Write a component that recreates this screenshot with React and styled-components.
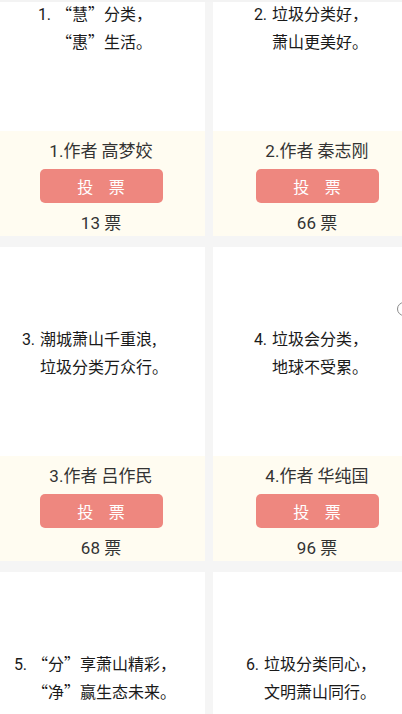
import React from "react";
import styled, { createGlobalStyle } from "styled-components";

const GlobalStyle = createGlobalStyle`
  html, body {
    margin: 0;
    padding: 0;
    background: #f5f5f5;
    overflow: hidden;
  }
  body {
    font-family: Roboto, "Noto Sans CJK SC", "Noto Sans", sans-serif;
    color: #222;
  }
`;

const Viewport = styled.div`
  width: 402px;
  height: 714px;
  overflow: hidden;
  position: relative;
`;

const TopEdge = styled.div`
  position: absolute;
  top: 0;
  left: 0;
  right: 0;
  height: 2px;
  background: #f3f3f3;
  z-index: 2;
`;

const Grid = styled.div`
  margin-top: -78px;
  margin-left: -3px;
  width: 424px;
  display: grid;
  grid-template-columns: 208px 208px;
  column-gap: 8px;
  row-gap: 11px;
`;

const Card = styled.div`
  display: flex;
  flex-direction: column;
  background: #fff;
  position: relative;
`;

const PoemArea = styled.div`
  height: 209px;
  display: flex;
  justify-content: center;
  align-items: center;
`;

const Poem = styled.div`
  display: flex;
  align-items: baseline;
  margin-right: 12px;
`;

const Num = styled.div`
  font-family: Roboto, sans-serif;
  font-size: 16px;
  line-height: 28px;
  color: #1a1a1a;
  padding-right: 5px;
  white-space: pre;
`;

const Lines = styled.div`
  display: flex;
  flex-direction: column;
`;

const Line = styled.div`
  font-family: "Noto Sans CJK SC", sans-serif;
  font-size: 16px;
  line-height: 28px;
  color: #1a1a1a;
  white-space: pre;
`;

const Footer = styled.div`
  height: 105px;
  box-sizing: border-box;
  background: #fffcf1;
  display: flex;
  flex-direction: column;
  align-items: center;
  padding-top: 8px;
`;

const Author = styled.div`
  font-size: 17px;
  line-height: 24px;
  color: #333;
`;

const VoteButton = styled.button`
  margin-top: 6px;
  width: 123px;
  height: 34px;
  border: none;
  border-radius: 5px;
  background: #ee877f;
  color: #fff;
  font-family: "Noto Sans CJK SC", sans-serif;
  font-size: 16px;
  letter-spacing: 6px;
  padding: 0 0 0 6px;
  display: flex;
  align-items: center;
  justify-content: center;
  cursor: pointer;
`;

const Votes = styled.div`
  margin-top: 8px;
  font-size: 17px;
  line-height: 24px;
  color: #333;
`;

const Ring = styled.div`
  position: absolute;
  left: 184px;
  top: 55px;
  width: 12px;
  height: 12px;
  border-radius: 50%;
  border: 1.5px solid #8a8a8a;
`;

const entries = [
  { n: "1.", l1: "“慧”分类，", l2: "“惠”生活。", author: "1.作者 高梦姣", votes: 13 },
  { n: "2.", l1: "垃圾分类好，", l2: "萧山更美好。", author: "2.作者 秦志刚", votes: 66 },
  { n: "3.", l1: "潮城萧山千重浪,", l2: "垃圾分类万众行。", author: "3.作者 吕作民", votes: 68 },
  { n: "4.", l1: "垃圾会分类，", l2: "地球不受累。", author: "4.作者 华纯国", votes: 96, ring: true },
  { n: "5.", l1: "“分”享萧山精彩，", l2: "“净”赢生态未来。", author: "5.作者 王丽", votes: 21 },
  { n: "6.", l1: "垃圾分类同心，", l2: "文明萧山同行。", author: "6.作者 李明", votes: 35 },
];

export default function App() {
  return (
    <Viewport>
      <GlobalStyle />
      <TopEdge />
      <Grid>
        {entries.map((e) => (
          <Card key={e.author}>
            <PoemArea>
              <Poem>
                <Num>{e.n}</Num>
                <Lines>
                  <Line>{e.l1}</Line>
                  <Line>{e.l2}</Line>
                </Lines>
              </Poem>
            </PoemArea>
            <Footer>
              <Author>{e.author}</Author>
              <VoteButton>投 票</VoteButton>
              <Votes>{e.votes} 票</Votes>
            </Footer>
            {e.ring && <Ring />}
          </Card>
        ))}
      </Grid>
    </Viewport>
  );
}
